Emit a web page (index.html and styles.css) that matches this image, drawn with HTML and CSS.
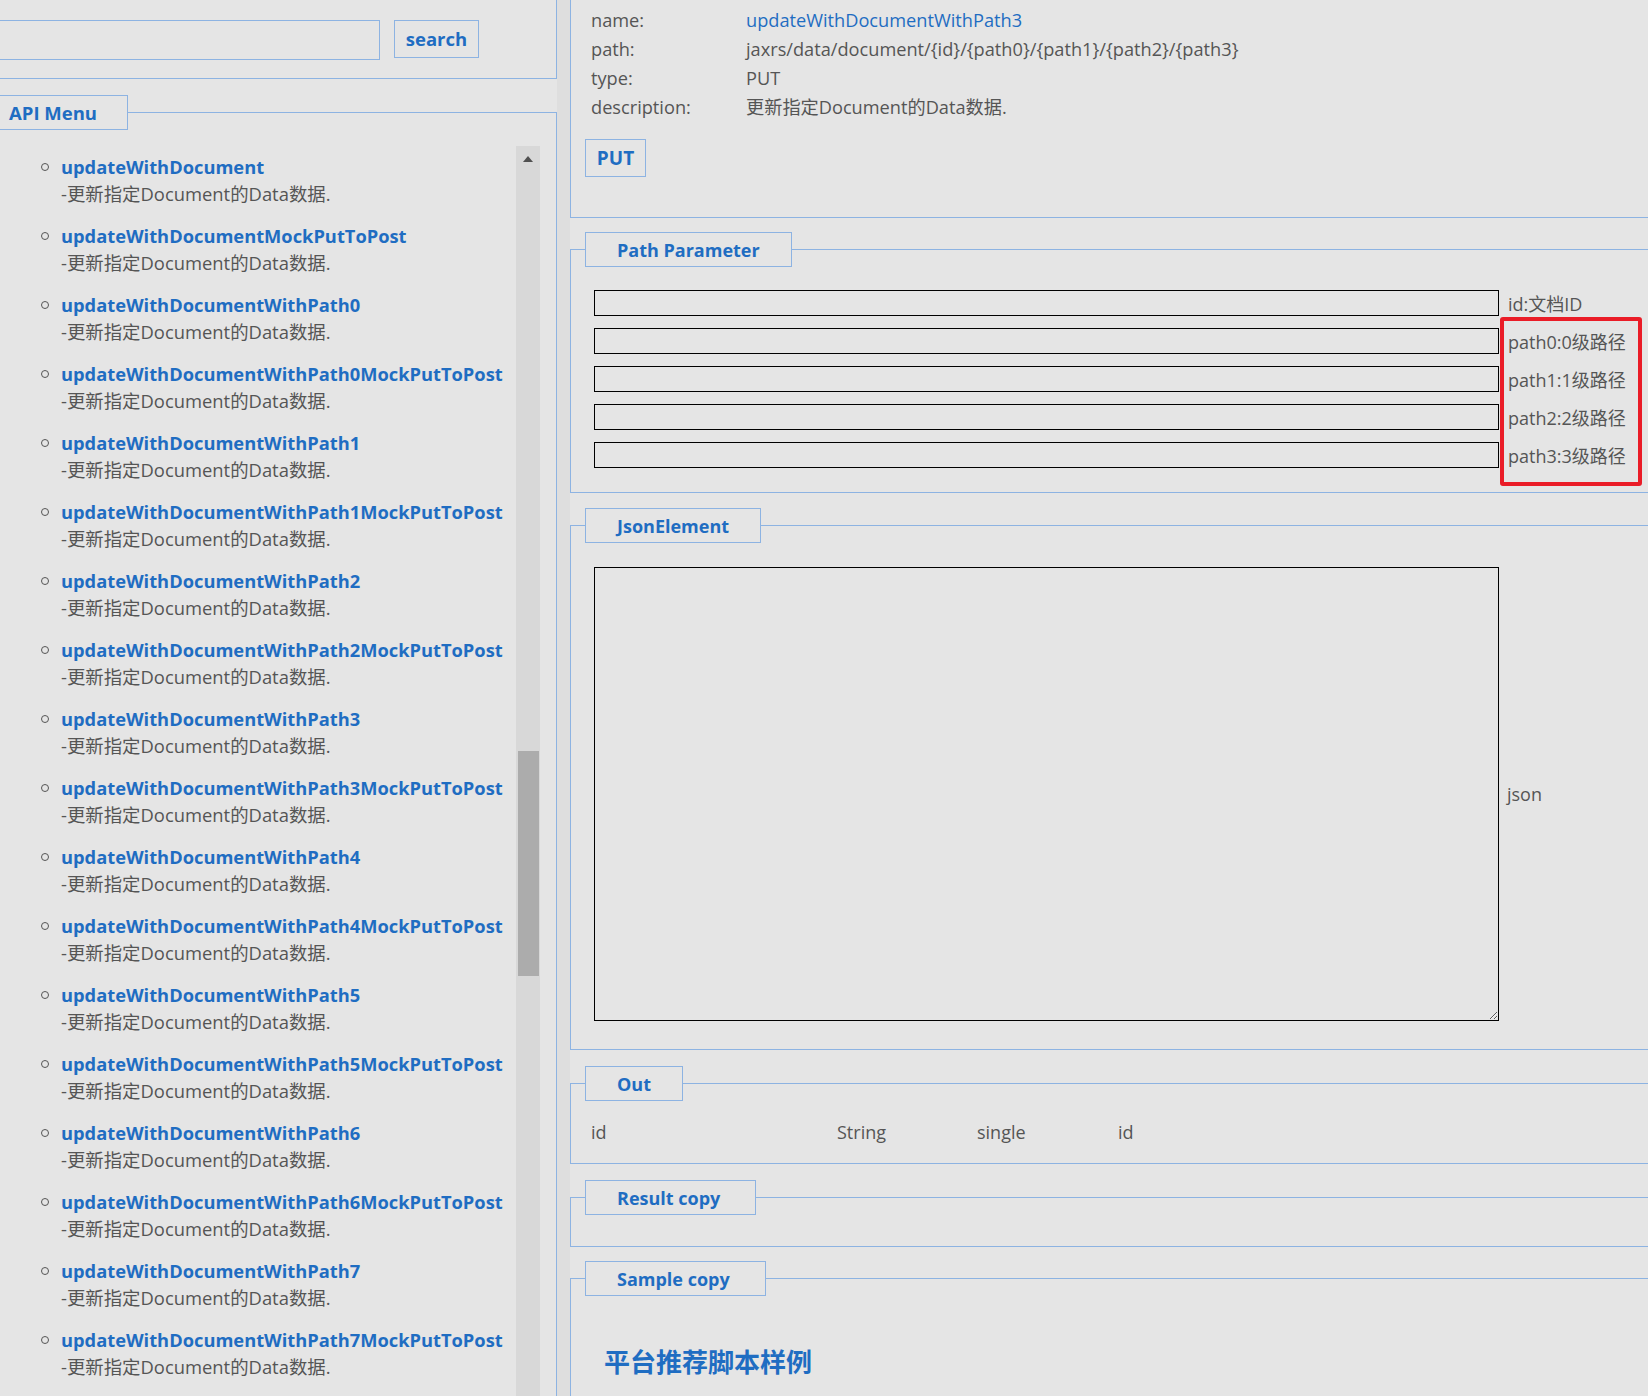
FILE: index.html
```html
<!DOCTYPE html>
<html lang="zh-CN">
<head>
<meta charset="utf-8">
<title>API</title>
<link rel="stylesheet" href="styles.css">
</head>
<body>
<div class="page">
  <aside class="left">
    <div class="search">
      <input class="search-input" type="text">
      <button class="search-btn">search</button>
    </div>
    <div class="menu">
      <div class="menu-legend">API Menu</div>
      <div class="menu-body">
        <ul class="api-list">
          <li class="item"><a class="item-title">updateWithDocument</a><div class="item-desc">-更新指定Document的Data数据.</div></li>
          <li class="item"><a class="item-title">updateWithDocumentMockPutToPost</a><div class="item-desc">-更新指定Document的Data数据.</div></li>
          <li class="item"><a class="item-title">updateWithDocumentWithPath0</a><div class="item-desc">-更新指定Document的Data数据.</div></li>
          <li class="item"><a class="item-title">updateWithDocumentWithPath0MockPutToPost</a><div class="item-desc">-更新指定Document的Data数据.</div></li>
          <li class="item"><a class="item-title">updateWithDocumentWithPath1</a><div class="item-desc">-更新指定Document的Data数据.</div></li>
          <li class="item"><a class="item-title">updateWithDocumentWithPath1MockPutToPost</a><div class="item-desc">-更新指定Document的Data数据.</div></li>
          <li class="item"><a class="item-title">updateWithDocumentWithPath2</a><div class="item-desc">-更新指定Document的Data数据.</div></li>
          <li class="item"><a class="item-title">updateWithDocumentWithPath2MockPutToPost</a><div class="item-desc">-更新指定Document的Data数据.</div></li>
          <li class="item"><a class="item-title">updateWithDocumentWithPath3</a><div class="item-desc">-更新指定Document的Data数据.</div></li>
          <li class="item"><a class="item-title">updateWithDocumentWithPath3MockPutToPost</a><div class="item-desc">-更新指定Document的Data数据.</div></li>
          <li class="item"><a class="item-title">updateWithDocumentWithPath4</a><div class="item-desc">-更新指定Document的Data数据.</div></li>
          <li class="item"><a class="item-title">updateWithDocumentWithPath4MockPutToPost</a><div class="item-desc">-更新指定Document的Data数据.</div></li>
          <li class="item"><a class="item-title">updateWithDocumentWithPath5</a><div class="item-desc">-更新指定Document的Data数据.</div></li>
          <li class="item"><a class="item-title">updateWithDocumentWithPath5MockPutToPost</a><div class="item-desc">-更新指定Document的Data数据.</div></li>
          <li class="item"><a class="item-title">updateWithDocumentWithPath6</a><div class="item-desc">-更新指定Document的Data数据.</div></li>
          <li class="item"><a class="item-title">updateWithDocumentWithPath6MockPutToPost</a><div class="item-desc">-更新指定Document的Data数据.</div></li>
          <li class="item"><a class="item-title">updateWithDocumentWithPath7</a><div class="item-desc">-更新指定Document的Data数据.</div></li>
          <li class="item"><a class="item-title">updateWithDocumentWithPath7MockPutToPost</a><div class="item-desc">-更新指定Document的Data数据.</div></li>
        </ul>
        <div class="scrollbar">
          <div class="scroll-arrow"></div>
          <div class="scroll-thumb"></div>
        </div>
      </div>
    </div>
  </aside>

  <main class="right">
    <section class="info">
      <div class="info-row"><span class="info-label">name:</span><span class="info-value link">updateWithDocumentWithPath3</span></div>
      <div class="info-row"><span class="info-label">path:</span><span class="info-value">jaxrs/data/document/{id}/{path0}/{path1}/{path2}/{path3}</span></div>
      <div class="info-row"><span class="info-label">type:</span><span class="info-value">PUT</span></div>
      <div class="info-row"><span class="info-label">description:</span><span class="info-value">更新指定Document的Data数据.</span></div>
      <button class="put-btn">PUT</button>
    </section>

    <section class="fs fs-path">
      <div class="legend">Path Parameter</div>
      <div class="param-rows">
        <div class="param-row"><input class="param-input" type="text"><span class="param-label">id:文档ID</span></div>
        <div class="param-row"><input class="param-input" type="text"><span class="param-label">path0:0级路径</span></div>
        <div class="param-row"><input class="param-input" type="text"><span class="param-label">path1:1级路径</span></div>
        <div class="param-row"><input class="param-input" type="text"><span class="param-label">path2:2级路径</span></div>
        <div class="param-row"><input class="param-input" type="text"><span class="param-label">path3:3级路径</span></div>
      </div>
      <div class="highlight"></div>
    </section>

    <section class="fs fs-json">
      <div class="legend">JsonElement</div>
      <div class="json-row">
        <textarea class="json-input"></textarea>
        <span class="param-label">json</span>
      </div>
    </section>

    <section class="fs fs-out">
      <div class="legend">Out</div>
      <div class="out-row">
        <span class="out-c1">id</span>
        <span class="out-c2">String</span>
        <span class="out-c3">single</span>
        <span class="out-c4">id</span>
      </div>
    </section>

    <section class="fs fs-result">
      <div class="legend">Result copy</div>
    </section>

    <section class="fs fs-sample">
      <div class="legend">Sample copy</div>
      <h2 class="sample-title">平台推荐脚本样例</h2>
    </section>
  </main>
</div>
</body>
</html>
```

FILE: styles.css
```css
html, body {
  margin: 0;
  padding: 0;
}
body {
  width: 1648px;
  height: 1396px;
  overflow: hidden;
  background: #e5e5e5;
  font-family: "Open Sans", "Noto Sans CJK SC", sans-serif;
  color: #555;
}
.page {
  display: flex;
  height: 1396px;
}

/* ---------- left column ---------- */
.left {
  width: 557px;
  flex: none;
  display: flex;
  flex-direction: column;
  background: #e5e5e5;
}
.search {
  height: 79px;
  box-sizing: border-box;
  border-right: 1px solid #8db3e2;
  border-bottom: 1px solid #8db3e2;
  display: flex;
  align-items: flex-start;
  gap: 14px;
  padding-top: 20px;
}
.search-input {
  width: 380px;
  height: 40px;
  box-sizing: border-box;
  border: 1px solid #8db3e2;
  border-left: none;
  background: transparent;
  margin: 0;
}
.search-btn {
  width: 85px;
  height: 38px;
  box-sizing: border-box;
  border: 1px solid #8db3e2;
  background: transparent;
  color: #1f6dc2;
  font-family: "Open Sans", sans-serif;
  font-weight: 700;
  font-size: 18.5px;
  padding: 0 0 2px;
  margin: 0;
}
.menu {
  margin-top: 33px;
  border-top: 1px solid #8db3e2;
  border-right: 1px solid #8db3e2;
  flex: 1;
  min-height: 0;
  display: flex;
  flex-direction: column;
}
.menu-legend {
  margin-top: -18px;
  align-self: flex-start;
  width: 128px;
  height: 35px;
  box-sizing: border-box;
  border: 1px solid #8db3e2;
  border-left: none;
  background: #e5e5e5;
  display: flex;
  align-items: center;
  padding-left: 9px;
  color: #1f6dc2;
  font-weight: 700;
  font-size: 18.5px;
}
.menu-body {
  margin-top: 16px;
  flex: 1;
  min-height: 0;
  display: flex;
}
.api-list {
  flex: 1;
  list-style: none;
  margin: 0;
  padding: 7px 0 0 61px;
  overflow: hidden;
}
.item {
  margin-bottom: 15px;
}
.item-title {
  display: flex;
  align-items: center;
  margin-left: -20px;
  height: 27px;
  color: #1f6dc2;
  font-weight: 700;
  font-size: 18.3px;
  white-space: nowrap;
}
.item-title::before {
  content: "";
  width: 8px;
  height: 8px;
  box-sizing: border-box;
  border: 1px solid #555;
  border-radius: 50%;
  margin-right: 12px;
  flex: none;
}
.item-desc {
  height: 27px;
  line-height: 27px;
  font-size: 18.4px;
  color: #555;
  white-space: nowrap;
}
.scrollbar {
  width: 24px;
  flex: none;
  margin-right: 16px;
  background: #d8d8d8;
  display: flex;
  flex-direction: column;
  align-items: center;
}
.scroll-arrow {
  margin-top: 10px;
  width: 0;
  height: 0;
  border-left: 5px solid transparent;
  border-right: 5px solid transparent;
  border-bottom: 6px solid #505050;
}
.scroll-thumb {
  margin-top: 589px;
  width: 21px;
  height: 225px;
  background: #acacac;
}

/* ---------- right column ---------- */
.right {
  flex: 1;
  min-width: 0;
  margin-left: 13px;
  display: flex;
  flex-direction: column;
  background: #e5e5e5;
  box-shadow: -13px 0 0 #dedede;
}
.info {
  height: 218px;
  box-sizing: border-box;
  border-left: 1px solid #8db3e2;
  border-bottom: 1px solid #8db3e2;
  padding-top: 6px;
}
.info-row {
  display: flex;
  height: 29px;
  line-height: 29px;
  padding-left: 20px;
  font-size: 18.2px;
  color: #555;
  white-space: nowrap;
}
.info-label {
  width: 155px;
  flex: none;
}
.link {
  color: #1f6dc2;
}
.put-btn {
  margin: 17px 0 0 14px;
  width: 61px;
  height: 38px;
  box-sizing: border-box;
  border: 1px solid #8db3e2;
  background: transparent;
  color: #1f6dc2;
  font-family: "Open Sans", sans-serif;
  font-weight: 700;
  font-size: 19px;
  padding: 0;
}

.fs {
  position: relative;
  border-top: 1px solid #8db3e2;
  border-left: 1px solid #8db3e2;
  border-bottom: 1px solid #8db3e2;
  display: flex;
  flex-direction: column;
  background: #e5e5e5;
}
.fs-path { margin-top: 31px; padding-bottom: 24px; }
.fs-json { margin-top: 32px; padding-bottom: 28px; }
.fs-out { margin-top: 33px; padding-bottom: 16px; }
.fs-result { margin-top: 33px; padding-bottom: 31px; }
.fs-sample { margin-top: 31px; border-bottom: none; flex: 1; }

.legend {
  margin: -18px 0 0 14px;
  align-self: flex-start;
  height: 35px;
  box-sizing: border-box;
  border: 1px solid #8db3e2;
  background: #e5e5e5;
  padding: 0 31px;
  display: flex;
  align-items: center;
  color: #1f6dc2;
  font-weight: 700;
  font-size: 18px;
  white-space: nowrap;
}
.fs-result .legend,
.fs-sample .legend {
  padding: 0 35px 0 31px;
}

.param-rows {
  margin-top: 23px;
  padding-left: 23px;
  display: flex;
  flex-direction: column;
  gap: 12px;
}
.param-row {
  display: flex;
  align-items: center;
  gap: 9px;
}
.param-input {
  width: 905px;
  height: 26px;
  box-sizing: border-box;
  border: 1px solid #000;
  background: transparent;
  margin: 0;
  flex: none;
}
.param-label {
  font-size: 18px;
  color: #555;
  white-space: nowrap;
}
.highlight {
  position: absolute;
  left: 929px;
  top: 67px;
  width: 142px;
  height: 169px;
  box-sizing: border-box;
  border: 4px solid #ea1c27;
  border-radius: 3px;
}

.json-row {
  margin-top: 24px;
  padding-left: 23px;
  display: flex;
  align-items: center;
  gap: 8px;
}
.json-input {
  width: 905px;
  height: 454px;
  box-sizing: border-box;
  border: 1px solid #000;
  background: transparent;
  margin: 0;
  resize: both;
  flex: none;
}

.out-row {
  margin-top: 17px;
  display: flex;
  height: 29px;
  line-height: 29px;
  padding-left: 20px;
  font-size: 18px;
  color: #555;
}
.out-c1 { width: 246px; }
.out-c2 { width: 140px; }
.out-c3 { width: 141px; }

.sample-title {
  margin: 49px 0 0 33px;
  line-height: 32px;
  font-size: 26px;
  font-weight: 700;
  color: #1f6dc2;
  font-family: "Noto Sans CJK SC", sans-serif;
}
```
